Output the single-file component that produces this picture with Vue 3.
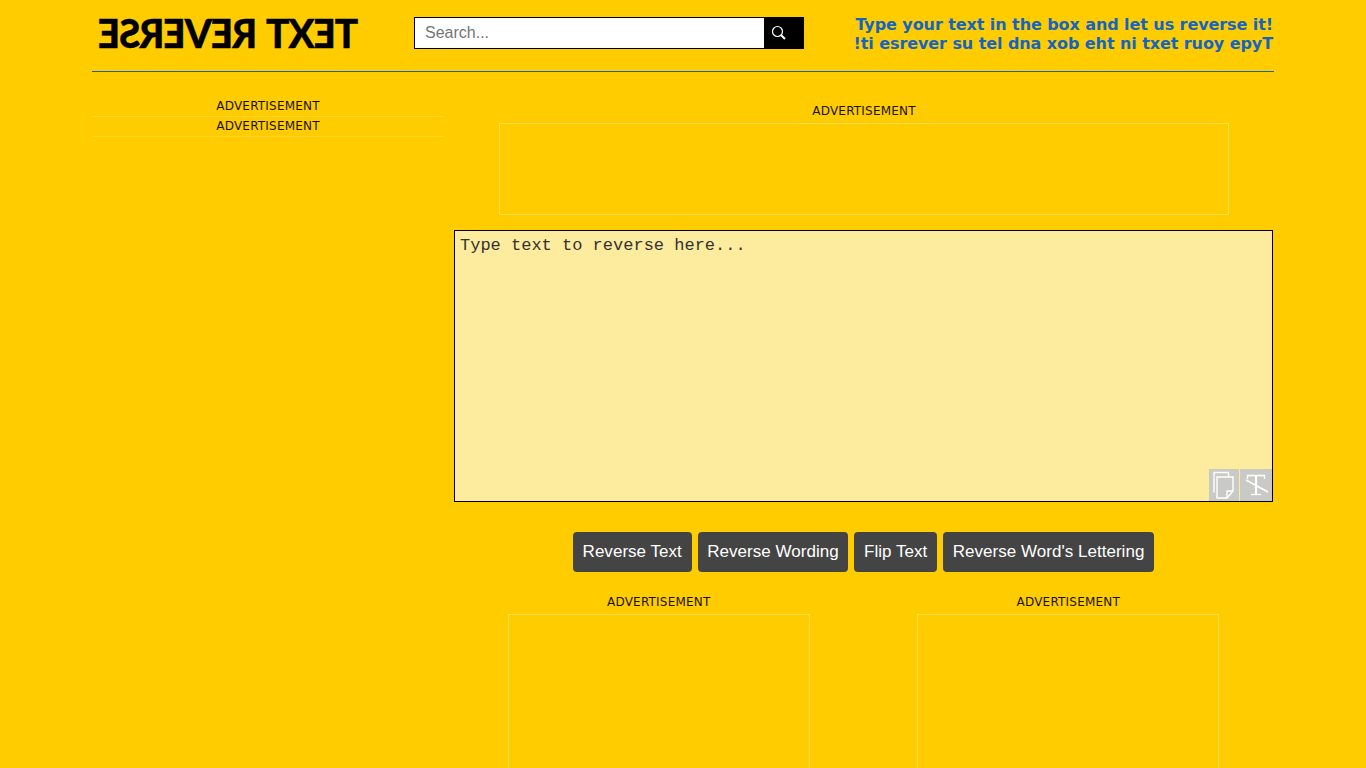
<script setup>
const buttons = ['Reverse Text', 'Reverse Wording', 'Flip Text', "Reverse Word's Lettering"]
</script>

<template>
  <div class="page">
    <header class="header">
      <div class="logo-wrap"><div class="logo">TEXT REVERSE</div></div>
      <form class="search" @submit.prevent>
        <input class="search-input" type="text" placeholder="Search..." />
        <button class="search-btn" type="button" aria-label="Search">
          <svg width="16" height="16" viewBox="0 0 16 16" fill="none" stroke="#fff">
            <circle cx="6.5" cy="6.5" r="5" stroke-width="1.2" />
            <path d="M10.2 10.2L14 14" stroke-width="2" />
          </svg>
        </button>
      </form>
      <div class="tagline">
        <div>Type your text in the box and let us reverse it!</div>
        <div>!ti esrever su tel dna xob eht ni txet ruoy epyT</div>
      </div>
    </header>

    <div class="columns">
      <aside class="side">
        <div class="side-ad">ADVERTISEMENT</div>
        <div class="side-ad">ADVERTISEMENT</div>
      </aside>
      <main class="main">
        <div class="ad-top">
          <div class="ad-label">ADVERTISEMENT</div>
          <div class="ad-box leader"></div>
        </div>
        <div class="editor">
          <textarea class="text" placeholder="Type text to reverse here..."></textarea>
          <div class="tools">
            <div class="tool">
              <svg width="30" height="32" viewBox="0 0 30 32" fill="none" stroke="#fff" stroke-width="1.4">
                <path d="M5 23.5V3.5H19.5V8" />
                <path d="M8 8H24V22L18 29H8Z" />
                <path d="M18 29V22H24" />
              </svg>
            </div>
            <div class="tool">
              <svg width="32" height="32" viewBox="0 0 32 32" fill="none" stroke="#fff" stroke-width="1.3">
                <path d="M7.5 10V6.5H24.5V10" />
                <path d="M16 6.5V25" stroke-width="2.2" />
                <path d="M11 25.5H21" />
                <path d="M6 11L28 23" stroke-width="1.6" />
              </svg>
            </div>
          </div>
        </div>
        <div class="actions">
          <button v-for="b in buttons" :key="b" class="action" type="button">{{ b }}</button>
        </div>
        <div class="ad-row">
          <div class="ad-cell">
            <div class="ad-label">ADVERTISEMENT</div>
            <div class="ad-box square"></div>
          </div>
          <div class="ad-cell">
            <div class="ad-label">ADVERTISEMENT</div>
            <div class="ad-box square"></div>
          </div>
        </div>
      </main>
    </div>
  </div>
</template>

<style>
html, body { margin: 0; height: 100%; overflow: hidden; background: #ffcc00; }
</style>

<style scoped>
.page {
  width: 1182px;
  height: 768px;
  margin: 0 auto;
  overflow: hidden;
  font-family: "DejaVu Sans", Verdana, sans-serif;
}
.header {
  box-sizing: border-box;
  border-bottom: 1px solid #1565c0;
  height: 72px;
  display: flex;
  align-items: flex-start;
}
.logo-wrap { width: 322px; padding: 13px 0 0 7px; box-sizing: border-box; }
.logo {
  display: inline-block;
  font-family: "Lato", sans-serif;
  font-weight: 900;
  font-size: 39px;
  line-height: 40px;
  letter-spacing: -1.2px;
  word-spacing: 3px;
  -webkit-text-stroke: 0.3px #000;
  white-space: nowrap;
  color: #000;
  transform: scaleX(-1);
}
.search { display: flex; width: 390px; margin-top: 17px; }
.search-input {
  width: 350px;
  height: 32px;
  box-sizing: border-box;
  border: 1px solid #000;
  border-right: 0;
  padding: 0 10px;
  background: #fff;
  font: 16px "Liberation Sans", Arial, sans-serif;
  outline: none;
}
.search-input::placeholder { color: #757575; }
.search-btn {
  width: 40px;
  height: 32px;
  border: 0;
  padding: 0 10px 0 0;
  background: #000;
  display: flex;
  align-items: center;
  justify-content: center;
}
.tagline {
  flex: 1;
  margin: 15px 1px 0 0;
  text-align: right;
  color: #1565c0;
  font-size: 16px;
  letter-spacing: -0.08px;
  font-weight: 700;
  line-height: 19px;
  white-space: nowrap;
}
.columns { display: flex; gap: 10px; }
.side { width: 352px; padding-top: 25px; }
.side-ad {
  height: 20px;
  box-sizing: border-box;
  border-bottom: 1px solid #ffd52b;
  text-align: center;
  font-size: 12px;
  letter-spacing: 0.2px;
  line-height: 19px;
  color: #1a1200;
}
.main { width: 820px; }
.ad-top { padding-top: 31px; text-align: center; }
.ad-label { font-size: 12px; letter-spacing: 0.2px; line-height: 16px; height: 21px; color: #1a1200; }
.ad-box { border: 1px solid #ffe14d; box-sizing: border-box; margin: 0 auto; }
.leader { width: 730px; height: 92px; margin-top: -1px; }
.editor { position: relative; margin-top: 15px; width: 819px; height: 272px; }
.text {
  display: block;
  width: 100%;
  height: 100%;
  box-sizing: border-box;
  border: 1px solid #000;
  padding: 5px;
  margin: 0;
  background: #fdeb9e;
  font: 17px "Liberation Mono", "Courier New", monospace;
  resize: none;
  outline: none;
}
.text::placeholder { color: #333; opacity: 1; }
.tools { position: absolute; right: 1px; bottom: 1px; display: flex; gap: 1px; }
.tool { height: 32px; background: #c9c9c6; display: flex; }
.actions { display: flex; justify-content: center; gap: 6px; margin-top: 30px; width: 819px; }
.action {
  height: 40px;
  padding: 0 9.7px;
  border: 0;
  border-radius: 4px;
  background: #444;
  color: #fff;
  font: 17px "Liberation Sans", Arial, sans-serif;
  letter-spacing: 0.03px;
  white-space: nowrap;
}
.ad-row { display: flex; margin-top: 22px; width: 819px; }
.ad-cell { flex: 1; text-align: center; }
.square { width: 302px; height: 252px; margin-top: -1px; }
</style>
